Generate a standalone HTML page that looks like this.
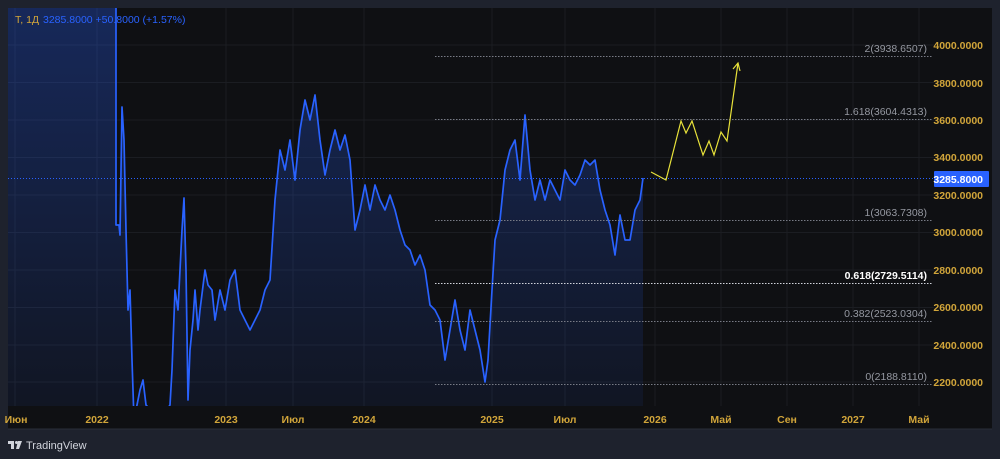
<!DOCTYPE html>
<html><head><meta charset="utf-8"><style>
html,body{margin:0;padding:0;background:#1e222d;width:1000px;height:459px;overflow:hidden;font-family:"Liberation Sans",sans-serif}
</style></head><body>
<svg width="1000" height="459" viewBox="0 0 1000 459" xmlns="http://www.w3.org/2000/svg" style="position:absolute;left:0;top:0">
<defs>
<linearGradient id="g" x1="0" y1="0" x2="0" y2="1">
<stop offset="0" stop-color="#2962ff" stop-opacity="0.3"/>
<stop offset="1" stop-color="#2962ff" stop-opacity="0.06"/>
</linearGradient>
<clipPath id="c"><rect x="8" y="8" width="926" height="398"/></clipPath>
</defs>
<rect x="0" y="0" width="1000" height="459" fill="#1e222d"/>
<rect x="8" y="8" width="984" height="421" fill="#0f1013"/>
<line x1="8" y1="429" x2="992" y2="429" stroke="#2a2e39"/>
<g stroke="#1b1d22" stroke-width="1">
<line x1="8" y1="45" x2="934" y2="45"/><line x1="8" y1="82.5" x2="934" y2="82.5"/><line x1="8" y1="120" x2="934" y2="120"/><line x1="8" y1="157.5" x2="934" y2="157.5"/><line x1="8" y1="195" x2="934" y2="195"/><line x1="8" y1="232.5" x2="934" y2="232.5"/><line x1="8" y1="270" x2="934" y2="270"/><line x1="8" y1="307.5" x2="934" y2="307.5"/><line x1="8" y1="345" x2="934" y2="345"/><line x1="8" y1="382" x2="934" y2="382"/>
<line x1="15" y1="8" x2="15" y2="406"/><line x1="97" y1="8" x2="97" y2="406"/><line x1="226" y1="8" x2="226" y2="406"/><line x1="293" y1="8" x2="293" y2="406"/><line x1="364" y1="8" x2="364" y2="406"/><line x1="492" y1="8" x2="492" y2="406"/><line x1="565" y1="8" x2="565" y2="406"/><line x1="655" y1="8" x2="655" y2="406"/><line x1="721" y1="8" x2="721" y2="406"/><line x1="787" y1="8" x2="787" y2="406"/><line x1="853" y1="8" x2="853" y2="406"/><line x1="919" y1="8" x2="919" y2="406"/>
</g>
<g clip-path="url(#c)">
<polygon fill="url(#g)" points="8,8 116,8 116,225 119,225 120,235 122,107 124,140 126,230 128,310 130,290 132,360 134,420 140,390 143,380 146,405 160,420 170,405 172,370 175,290 178,310 182,230 184,198 186,270 188,400 190,350 193,320 195,290 198,330 200,310 205,270 208,285 212,290 215,320 220,290 225,310 230,280 235,270 240,310 245,320 250,330 255,320 260,310 265,290 270,280 275,200 280,150 285,170 290,140 295,180 300,130 305,100 310,120 315,95 320,140 325,175 330,150 335,130 340,150 345,135 350,160 355,230 360,210 365,185 370,210 375,185 380,200 385,210 390,195 395,210 400,230 405,245 410,250 415,265 420,255 425,270 430,305 435,310 440,320 445,360 450,330 455,300 460,330 465,350 470,310 475,330 480,350 485,382 488,360 492,290 495,240 500,220 505,170 510,150 515,140 520,180 525,115 530,170 535,200 540,180 545,200 550,180 555,190 560,200 565,170 570,180 575,185 580,175 585,160 590,165 595,160 600,190 605,210 610,225 615,255 620,215 625,240 630,240 635,210 640,200 643,178 643,406 8,406"/>
<polyline fill="none" stroke="#2962ff" stroke-width="1.7" stroke-linejoin="round" points="116,0 116,225 119,225 120,235 122,107 124,140 126,230 128,310 130,290 132,360 134,420 140,390 143,380 146,405 160,420 170,405 172,370 175,290 178,310 182,230 184,198 186,270 188,400 190,350 193,320 195,290 198,330 200,310 205,270 208,285 212,290 215,320 220,290 225,310 230,280 235,270 240,310 245,320 250,330 255,320 260,310 265,290 270,280 275,200 280,150 285,170 290,140 295,180 300,130 305,100 310,120 315,95 320,140 325,175 330,150 335,130 340,150 345,135 350,160 355,230 360,210 365,185 370,210 375,185 380,200 385,210 390,195 395,210 400,230 405,245 410,250 415,265 420,255 425,270 430,305 435,310 440,320 445,360 450,330 455,300 460,330 465,350 470,310 475,330 480,350 485,382 488,360 492,290 495,240 500,220 505,170 510,150 515,140 520,180 525,115 530,170 535,200 540,180 545,200 550,180 555,190 560,200 565,170 570,180 575,185 580,175 585,160 590,165 595,160 600,190 605,210 610,225 615,255 620,215 625,240 630,240 635,210 640,200 643,178"/>
</g>
<line x1="8" y1="178.5" x2="934" y2="178.5" stroke="#2962ff" stroke-dasharray="1,2"/>
<g stroke="#787b86" stroke-dasharray="1.5,1.5">
<line x1="435" y1="56.5" x2="933" y2="56.5"/><line x1="435" y1="119.5" x2="933" y2="119.5"/><line x1="435" y1="220.5" x2="933" y2="220.5"/><line x1="435" y1="283.5" x2="933" y2="283.5" stroke="#d1d4dc"/><line x1="435" y1="321.5" x2="933" y2="321.5"/><line x1="435" y1="384.5" x2="933" y2="384.5"/>
</g>
<g font-size="10.5" fill="#9598a1" text-anchor="end" font-family="Liberation Sans,sans-serif">
<text x="927" y="52">2(3938.6507)</text><text x="927" y="115">1.618(3604.4313)</text><text x="927" y="216">1(3063.7308)</text><text x="927" y="279" fill="#ffffff" font-weight="bold">0.618(2729.5114)</text><text x="927" y="317">0.382(2523.0304)</text><text x="927" y="380">0(2188.8110)</text>
</g>
<polyline fill="none" stroke="#e8e23a" stroke-width="1.2" points="651,172 666,180 681,121 686,133 692,121 703,155 709,141 714,155 721,132 727,141 738,63"/>
<polyline fill="none" stroke="#e8e23a" stroke-width="1.2" points="733,69 738,63 740,71"/>
<g font-size="10.5" fill="#d1a53a" font-weight="bold" text-anchor="end">
<text x="983" y="49">4000.0000</text><text x="983" y="87">3800.0000</text><text x="983" y="124">3600.0000</text><text x="983" y="161">3400.0000</text><text x="983" y="199">3200.0000</text><text x="983" y="236">3000.0000</text><text x="983" y="274">2800.0000</text><text x="983" y="311">2600.0000</text><text x="983" y="349">2400.0000</text><text x="983" y="386">2200.0000</text>
</g>
<rect x="934" y="171" width="55" height="16" rx="1" fill="#2962ff"/>
<text x="983" y="183" font-size="10.5" fill="#fff" font-weight="bold" text-anchor="end">3285.8000</text>
<g font-size="10.5" fill="#d1a53a" font-weight="bold" text-anchor="middle">
<text x="16" y="423">Июн</text><text x="97" y="423">2022</text><text x="226" y="423">2023</text><text x="293" y="423">Июл</text><text x="364" y="423">2024</text><text x="492" y="423">2025</text><text x="565" y="423">Июл</text><text x="655" y="423">2026</text><text x="721" y="423">Май</text><text x="787" y="423">Сен</text><text x="853" y="423">2027</text><text x="919" y="423">Май</text>
</g>
<text x="15" y="23" font-size="10.5" fill="#d1a53a">Т, 1Д</text>
<text x="43" y="23" font-size="10.5" fill="#2962ff">3285.8000  +50.8000 (+1.57%)</text>
<g fill="#d1d4dc">
<rect x="8" y="441" width="6" height="3"/><rect x="11" y="441" width="3" height="8"/><circle cx="16.5" cy="442.5" r="1.5"/><polygon points="18,441 22,441 19,449 16,449"/>
</g>
<text x="26" y="449" font-size="11" fill="#d1d4dc">TradingView</text>
</svg>
</body></html>
